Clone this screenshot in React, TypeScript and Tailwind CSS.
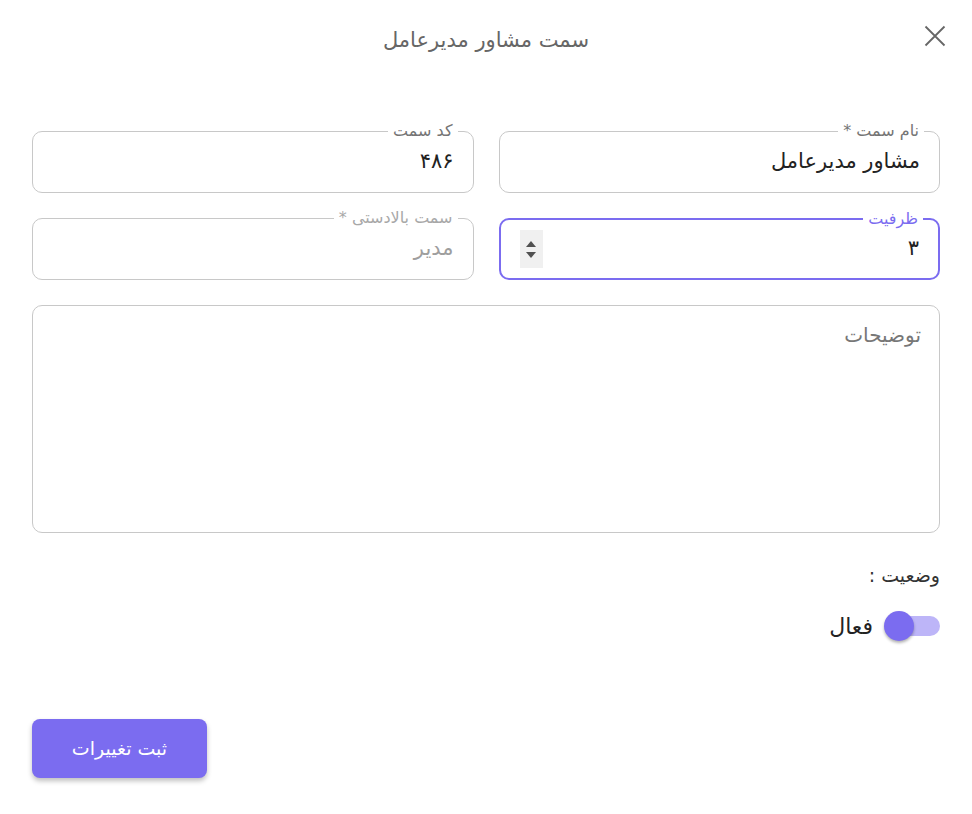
const FONT = { fontFamily: '"DejaVu Sans", sans-serif' };

function OutlinedField({
  label,
  value,
  disabled,
  focused,
  spinner,
}: {
  label: string;
  value: string;
  disabled?: boolean;
  focused?: boolean;
  spinner?: boolean;
}) {
  return (
    <div
      className={`relative flex h-[62px] items-center rounded-[10px] px-[19px] ${
        focused ? 'border-2 border-[#7b6cf0]' : 'border border-[#c8c8c8]'
      }`}
    >
      <span
        className={`absolute -top-[12px] right-[15px] bg-white px-[5px] text-[16px] leading-[22px] ${
          focused ? 'text-[#7b6cf0]' : disabled ? 'text-[#a8a8a8]' : 'text-[#757575]'
        }`}
      >
        {label}
      </span>
      <span
        className={`flex-1 text-[21px] ${disabled ? 'text-[#9e9e9e]' : 'text-[#222]'}`}
      >
        {value}
      </span>
      {spinner && (
        <div className="flex h-[38px] w-[23px] flex-col items-center justify-center gap-[5px] bg-[#f0f0f0]">
          <span className="h-0 w-0 border-x-[5px] border-b-[6px] border-x-transparent border-b-[#505050]" />
          <span className="h-0 w-0 border-x-[5px] border-t-[6px] border-x-transparent border-t-[#505050]" />
        </div>
      )}
    </div>
  );
}

export default function App() {
  return (
    <div dir="rtl" style={FONT} className="min-h-screen bg-white px-[32px]">
      {/* Header */}
      <header className="relative flex items-center justify-center pt-[24px]">
        <h2 className="text-[21px] leading-[32px] text-[#666]">سمت مشاور مدیرعامل</h2>
        <button type="button" className="absolute -right-[6px] top-[25px] text-[#666]">
          <svg width="22" height="22" viewBox="0 0 22 22" fill="none" stroke="currentColor" strokeWidth="1.8">
            <path d="M1.5 1.5 20.5 20.5M20.5 1.5 1.5 20.5" />
          </svg>
        </button>
      </header>

      {/* Fields */}
      <div className="mt-[75px] grid grid-cols-2 gap-x-[25px] gap-y-[25px]">
        <OutlinedField label="نام سمت *" value="مشاور مدیرعامل" />
        <OutlinedField label="کد سمت" value="۴۸۶" />
        <OutlinedField label="ظرفیت" value="۳" focused spinner />
        <OutlinedField label="سمت بالادستی *" value="مدیر" disabled />
      </div>

      <div className="mt-[25px] h-[228px] rounded-[10px] border border-[#c8c8c8] px-[18px] pt-[14px]">
        <span className="text-[20px] text-[#777]">توضیحات</span>
      </div>

      {/* Status */}
      <div className="mt-[28px] text-[19px] text-[#333]">وضعیت :</div>
      <div className="mt-[20px] flex items-center gap-[12px]">
        <div className="relative h-[20px] w-[55px] rounded-full bg-[#bdb5f8]">
          <span className="absolute -top-[5px] -left-[1px] h-[30px] w-[30px] rounded-full bg-[#7b6cf0] shadow-[0_2px_3px_rgba(0,0,0,0.3)]" />
        </div>
        <span className="text-[22px] text-[#222]">فعال</span>
      </div>

      {/* Submit */}
      <div className="mt-[76px] flex justify-end">
        <button
          type="button"
          className="h-[59px] w-[175px] rounded-[8px] bg-[#7b6cf0] text-[19px] text-white shadow-[0_3px_5px_rgba(0,0,0,0.25)]"
        >
          ثبت تغییرات
        </button>
      </div>
    </div>
  );
}
